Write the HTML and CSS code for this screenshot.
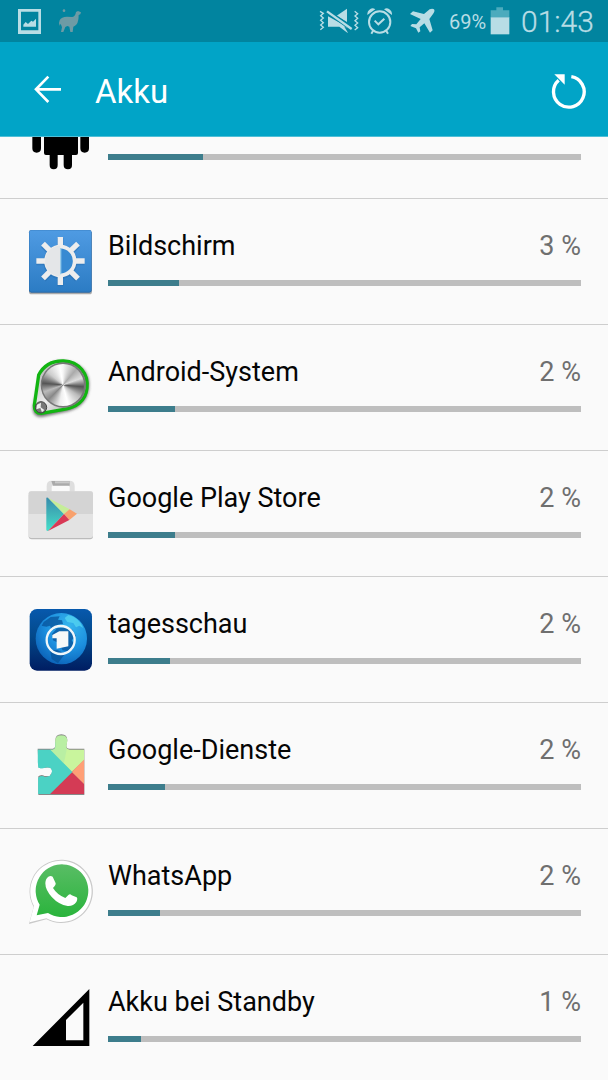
FILE: index.html
```html
<!DOCTYPE html>
<html lang="de">
<head>
<meta charset="utf-8">
<title>Akku</title>
<link rel="stylesheet" href="styles.css">
</head>
<body>
<div class="screen">
  <div class="status">
    <svg class="notifications" viewBox="0 0 300 126">
      <path fill="#b8dde5" fill-rule="evenodd" d="M54 27H123V102H54ZM63 35V91H115V35ZM70 80V74L77 66L84 72L94 62L99 65L108 56V80Z"/>
      <circle cx="192" cy="32" r="4" fill="#6d9ba5"/>
      <path fill="#6d9ba5" d="M228 36L234 33L243 37L241 43L236 45Q236 64 230 73Q225 78 220 80L218 96H211L208 80L202 78L196 81L190 96H183L186 82L182 71L179 77Q175 69 179 61Q184 50 201 50L217 51Q226 49 228 36Z"/>
    </svg>
    <svg class="indicators" viewBox="0 0 390 126">
      <g fill="none" stroke="#b8dde5" stroke-width="4">
        <path d="M36 34L46 40L38 47L46 54L38 61L46 68L38 75L46 82L37 89M140 34L149 41L141 48L149 55L141 62L149 69L141 76L149 83L140 90"/>
        <circle cx="215" cy="66" r="32" stroke-width="6"/>
        <path stroke-width="6" d="M200 62L211 73L229 56M195 93L190 101M235 93L240 101"/>
      </g>
      <path fill="#b8dde5" d="M86 47L117 26V66ZM60 49L117 80V84L108 79L119 97V99L94 80H60ZM178 45Q177 33 187 27Q194 22 202 28ZM252 45Q253 33 243 27Q236 22 228 28Z"/>
      <path d="M54 31L132 87" stroke="#01849f" stroke-width="13"/>
      <path d="M57 34L131 87" stroke="#b8dde5" stroke-width="7"/>
      <path fill="#b8dde5" d="M306 42L315 34L348 42L365 28Q373 24 378 28Q382 33 375 42L364 57L374 91L366 98L349 70L335 82L337 94L331 98L324 85L307 78L312 72L325 73L338 57Z"/>
    </svg>
    <span class="level">69%</span>
    <svg class="battery" viewBox="0 0 60 84"><path fill="#4cabbd" d="M2 10H19V1H39V10H58V32H2Z"/><path fill="#b8dde5" d="M2 31H58V82H2Z"/></svg>
    <time class="clock">01:43</time>
  </div>
  <header class="header">
    <svg class="back" viewBox="0 0 84 84" fill="none" stroke="#fff" stroke-width="8"><path d="M46 5L9 43L46 81M9 43H84"/></svg>
    <h1 class="title">Akku</h1>
    <svg class="refresh" viewBox="0 0 108 108"><path d="M64 11A46 46 0 1 1 26 22" fill="none" stroke="#fff" stroke-width="10"/><path fill="#fff" d="M13 4H44V35Z"/></svg>
  </header>
  <main class="list">
    <section class="row">
      <svg class="icon" viewBox="60 -108 240 240"><path d="M132 -42H234V69Q234 75 228 75H216V105Q216 118 204 118Q191 118 191 105V75H173V105Q173 118 161 118Q149 118 149 105V75H138Q132 75 132 69ZM97 -25Q97 -38 110 -38Q123 -38 123 -25V55Q123 68 110 68Q97 68 97 55ZM241 -25Q241 -38 254 -38Q267 -38 267 -25V55Q267 68 254 68Q241 68 241 55Z"/></svg>
      <div class="info"><div class="line"></div><div class="bar"><div class="fill" style="width:95px"></div></div></div>
    </section>
    <section class="row">
      <svg class="icon" viewBox="0 0 240 240">
        <defs><linearGradient id="blue" x2="0" y2="1"><stop stop-color="#4f9be3"/><stop offset="1" stop-color="#2c7cc4"/></linearGradient></defs>
        <rect x="27" y="34" width="189" height="189" rx="8" fill="#777" opacity=".6"/>
        <rect x="27" y="30" width="188" height="188" rx="7" fill="#2666a5"/>
        <rect x="28" y="31" width="186" height="184" rx="6" fill="url(#blue)"/>
        <circle cx="121" cy="126" r="44" fill="none" stroke="#2568a8" stroke-width="14" opacity=".4"/>
        <g stroke="#2568a8" stroke-width="19" opacity=".4"><path d="M121 54V80M121 168V199M49 126H76M166 126H193M70 76L90 96M152 158L172 178M70 178L90 158M152 96L172 76"/></g>
        <circle cx="121" cy="124" r="44" fill="#378ad2"/>
        <g stroke="#ededed" stroke-width="16"><path d="M121 51V80M121 168V195M49 123H76M166 123H194M69 71L90 92M152 154L174 176M69 175L90 154M152 92L174 71"/></g>
        <circle cx="121" cy="123" r="43" fill="none" stroke="#ededed" stroke-width="11"/>
        <path fill="#e4e6e8" d="M121 77A46 46 0 0 0 121 169Z"/><path d="M122 84V163" stroke="#98cbe9" stroke-width="4"/>
      </svg>
      <div class="info"><div class="line"><span>Bildschirm</span><span class="pct">3 %</span></div><div class="bar"><div class="fill" style="width:71px"></div></div></div>
    </section>
    <section class="row">
      <div class="icon dial">
      <svg class="art" viewBox="0 -12 240 240">
        <defs><filter id="soft" x="-20%" y="-20%" width="140%" height="140%"><feGaussianBlur stdDeviation="5"/></filter><linearGradient id="steel" x2="1" y2="1"><stop stop-color="#aaa"/><stop offset=".5" stop-color="#eee"/><stop offset="1" stop-color="#888"/></linearGradient></defs>
        <path fill="#444" opacity=".75" filter="url(#soft)" d="M60 76C79 42 105 29 137 33C189 39 215 77 206 120C200 162 168 180 132 187L65 201Q38 201 38 174Z"/>
        <path fill="url(#steel)" stroke="#12b512" stroke-width="10" d="M56 75C71 46 99 32 131 33C178 35 206 73 201 115C197 153 167 173 132 178L64 190Q42 190 43 166Z"/>
        <circle cx="130" cy="105" r="68" fill="#777"/><circle cx="63" cy="172" r="17" fill="#777" stroke="#444" stroke-width="3"/><path fill="#eee" d="M51 164L63 158L62 172L73 180L66 187L61 174L49 178Z"/>
      </svg>
      <span class="metal"></span>
      </div>
      <div class="info"><div class="line"><span>Android-System</span><span class="pct">2 %</span></div><div class="bar"><div class="fill" style="width:67px"></div></div></div>
    </section>
    <section class="row">
      <svg class="icon" viewBox="0 6 240 240">
        <path fill="#dedede" d="M80 66V48Q80 32 95 32H148Q164 32 164 48V66H149V50L144 46H99L95 50V66Z"/><path fill="#aaa" d="M94 33H149V47H99Z"/><path fill="#c9c9c9" d="M105 34H149V40H105Z"/>
        <rect x="26" y="68" width="193" height="140" rx="9" fill="#bbb"/><rect x="26" y="64" width="193" height="140" rx="8" fill="#e3e3e3"/><path fill="#d4d4d4" d="M26 132V70Q26 64 33 64H212Q219 64 219 71V132Z"/>
        <defs><linearGradient id="aqua" x2="0" y2="1"><stop stop-color="#378bad"/><stop offset=".5" stop-color="#3fb5b8"/><stop offset="1" stop-color="#45dfca"/></linearGradient></defs>
        <path fill="url(#aqua)" d="M79 84Q79 81 84 83L132 132L84 183Q79 183 79 179Z"/><path fill="#c5ed98" d="M84 83L149 118L132 132Z"/><path fill="#f8a16d" d="M149 118L171 131L148 150L132 132Z"/><path fill="#d83955" d="M84 183L132 132L148 150Z"/>
      </svg>
      <div class="info"><div class="line"><span>Google Play Store</span><span class="pct">2 %</span></div><div class="bar"><div class="fill" style="width:67px"></div></div></div>
    </section>
    <section class="row">
      <svg class="icon" viewBox="0 -6 240 240">
        <defs><linearGradient id="night" x2="0" y2="1"><stop stop-color="#0759ad"/><stop offset=".45" stop-color="#034889"/><stop offset="1" stop-color="#001d62"/></linearGradient><radialGradient id="globe" cx=".65" cy=".25" r=".9"><stop stop-color="#36b5ed"/><stop offset=".5" stop-color="#1c90df"/><stop offset="1" stop-color="#0756ae"/></radialGradient></defs>
        <rect x="29" y="27" width="187" height="185" rx="22" fill="url(#night)"/>
        <circle cx="124" cy="116" r="77" fill="url(#globe)"/>
        <path fill="#075199" d="M71 66L92 51L119 49L114 59L126 61L129 72L114 74L110 85L95 91L90 77L79 80L65 77ZM96 102L111 85L142 80L157 89L168 108L155 121L163 133L144 154L128 151L116 129L99 121ZM90 151L112 150L135 162L125 175L114 190L95 177Z" opacity=".75"/>
        <path fill="#55d5f0" d="M145 45Q175 50 190 84L178 77L168 82L160 69L142 66L134 54Z" opacity=".75"/>
        <circle cx="122" cy="120" r="42" fill="none" stroke="#f0f7fa" stroke-width="7"/><path fill="#f5f8f8" d="M97 105L118 94H145V139L110 146V115H97Z"/>
      </svg>
      <div class="info"><div class="line"><span>tagesschau</span><span class="pct">2 %</span></div><div class="bar"><div class="fill" style="width:62px"></div></div></div>
    </section>
    <section class="row">
      <svg class="icon" viewBox="0 -3 240 240">
        <defs><clipPath id="puzzle"><path d="M53 74H98Q107 73 106 62V48Q106 31 124 31Q142 31 142 48L139 64Q139 74 149 74H193V207H55V158Q65 151 74 156Q95 158 96 139Q96 124 77 127Q69 132 56 128L53 112Z"/></clipPath></defs>
        <path fill="#888" d="M53 71H98Q106 70 106 60V46Q106 28 124 28Q142 28 142 46L139 62Q139 71 149 71H193V210H55V154Q65 147 74 153H90V130H56Z"/>
        <path fill="#fafafa" d="M50 128H77Q96 124 97 140Q94 152 78 152Q65 147 50 153Z"/>
        <g clip-path="url(#puzzle)"><path fill="#4bd2c4" d="M50 25H92L155 141L88 210H50Z"/><path fill="#c9f59d" d="M95 20H195V103L155 141L90 74Z"/><path fill="#ff9f76" d="M155 141L195 101V181Z"/><path fill="#d43b55" d="M155 141L195 180V210H86Z"/><path fill="#4bd2c4" d="M50 74H91L157 141L90 207H50Z"/><path fill="#94e1b2" d="M90 74L105 60V30H143L140 74L131 117Z" opacity=".3"/></g>
      </svg>
      <div class="info"><div class="line"><span>Google-Dienste</span><span class="pct">2 %</span></div><div class="bar"><div class="fill" style="width:57px"></div></div></div>
    </section>
    <section class="row">
      <svg class="icon" viewBox="0 0 240 240">
        <defs><linearGradient id="green" x2="0" y2="1"><stop stop-color="#59bd65"/><stop offset="1" stop-color="#2ab43c"/></linearGradient></defs>
        <path fill="#c9c9c9" d="M27 222L41 171A95 95 0 1 1 79 208Z"/>
        <path fill="#fff" d="M29 217L42 168A92 92 0 1 1 79 205Z"/>
        <path fill="url(#green)" d="M50 196L59 164A79 79 0 1 1 84 189Z"/>
        <path fill="#fff" d="M85 80Q92 76 98 80L107 100Q108 105 99 114Q111 134 136 144L146 134Q151 131 155 136L170 142Q174 146 169 156Q160 169 143 168Q116 164 96 142Q76 120 76 100Q76 87 85 80Z"/>
      </svg>
      <div class="info"><div class="line"><span>WhatsApp</span><span class="pct">2 %</span></div><div class="bar"><div class="fill" style="width:52px"></div></div></div>
    </section>
    <section class="row">
      <svg class="icon" viewBox="0 -12 240 240"><path fill-rule="evenodd" d="M38 198L208 27V198ZM138 120V181H190V68Z"/></svg>
      <div class="info"><div class="line"><span>Akku bei Standby</span><span class="pct">1 %</span></div><div class="bar"><div class="fill" style="width:33px"></div></div></div>
    </section>
  </main>
</div>
</body>
</html>
```
FILE: styles.css
```css
* { box-sizing: border-box; }
body { margin: 0; font-family: Roboto, "Noto Sans", sans-serif; background: #fafafa; }
svg { display: block; flex: none; }
.screen { width: 608px; height: 1080px; overflow: hidden; display: flex; flex-direction: column; }
.status { height: 42px; flex: none; display: flex; background: #01849f; color: #b8dde5; }
.notifications { width: 100px; height: 42px; margin-right: 208px; }
.indicators { width: 130px; height: 42px; }
.level { width: 52px; padding-left: 11px; padding-top: 10px; font-size: 20px; line-height: 24px; white-space: nowrap; }
.battery { width: 20px; height: 28px; margin-top: 7px; }
.clock { margin-left: 11px; padding-top: 3px; font-size: 30px; line-height: 38px; font-weight: 300; -webkit-text-stroke: .3px #b8dde5; }
.header { height: 95px; flex: none; display: flex; background: #01a4c7; border-bottom: 1px solid #4fbfd7; position: relative; z-index: 1; }
.back { width: 28px; height: 28px; margin: 33px 0 0 33px; }
.title { margin: 30px 0 0 34px; color: #fff; font-size: 33px; line-height: 39px; font-weight: 400; }
.refresh { width: 36px; height: 36px; margin: 31px 22px 0 auto; }
.list { flex: none; margin-top: -64px; }
.row { height: 126px; display: flex; padding-left: 20px; border-bottom: 1px solid #cecece; }
.row:last-child { border-bottom: 0; }
.icon { width: 80px; height: 80px; margin-top: 21px; flex: none; }
.dial { display: grid; }
.art { grid-area: 1 / 1; width: 80px; height: 80px; }
.metal { grid-area: 1 / 1; width: 42px; height: 42px; margin: 18px 0 0 22px; border-radius: 50%; background: conic-gradient(#f6f6f6, #aaa 40deg, #ddd 70deg, #555 95deg, #bbb 125deg, #fff 165deg, #eee 190deg, #888 225deg, #bbb 250deg, #555 275deg, #ccc 310deg, #fff 350deg, #f6f6f6); }
.info { width: 473px; margin-left: 8px; padding-top: 31px; }
.line { display: flex; justify-content: space-between; font-size: 27px; line-height: 32px; height: 32px; color: #050505; white-space: nowrap; }
.pct { color: #6f6f6f; }
.bar { height: 6px; margin-top: 18px; background: #bebebe; }
.fill { height: 6px; background: #3d7d8c; }
```
